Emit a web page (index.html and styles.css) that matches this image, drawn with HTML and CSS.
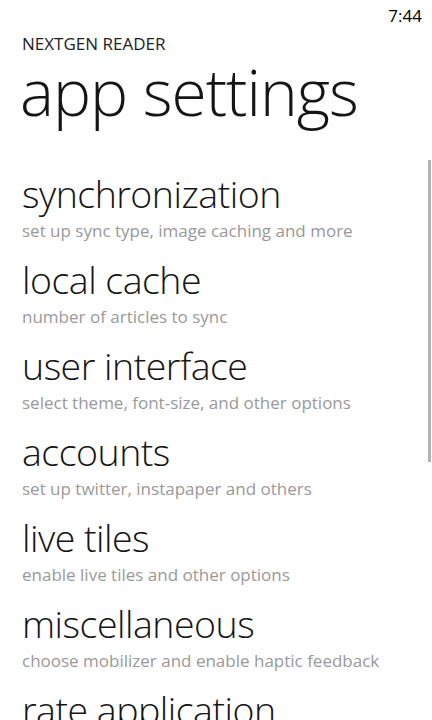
FILE: index.html
```html
<!DOCTYPE html>
<html>
<head>
<meta charset="utf-8">
<link rel="stylesheet" href="styles.css">
</head>
<body>
<div class="phone">
  <div class="status"><span class="time">7:44</span></div>
  <div class="app-name">NEXTGEN READER</div>
  <h1 class="page-title">app settings</h1>
  <div class="content">
    <ul class="list">
      <li class="item"><div class="item-title">synchronization</div><div class="item-sub">set up sync type, image caching and more</div></li>
      <li class="item"><div class="item-title">local cache</div><div class="item-sub">number of articles to sync</div></li>
      <li class="item"><div class="item-title">user interface</div><div class="item-sub">select theme, font-size, and other options</div></li>
      <li class="item"><div class="item-title">accounts</div><div class="item-sub">set up twitter, instapaper and others</div></li>
      <li class="item"><div class="item-title">live tiles</div><div class="item-sub">enable live tiles and other options</div></li>
      <li class="item"><div class="item-title">miscellaneous</div><div class="item-sub">choose mobilizer and enable haptic feedback</div></li>
      <li class="item"><div class="item-title">rate application</div><div class="item-sub">rate and review this app</div></li>
    </ul>
    <div class="scrollbar"></div>
  </div>
</div>
</body>
</html>
```
FILE: styles.css
```css
html, body {
  margin: 0;
  padding: 0;
  background: #ffffff;
}
.phone {
  width: 432px;
  height: 720px;
  overflow: hidden;
  position: relative;
  font-family: "Open Sans", "Noto Sans", sans-serif;
  color: #000;
}
.status {
  height: 30px;
  display: flex;
  justify-content: flex-end;
  align-items: center;
  padding-right: 10px;
}
.time {
  font-size: 17px;
  font-weight: 400;
  color: #000;
}
.app-name {
  padding-left: 22px;
  font-size: 17px;
  line-height: 28px;
  font-weight: 400;
  color: #222;
}
.page-title {
  margin: 0;
  padding-left: 20px;
  font-size: 64px;
  font-weight: 300;
  line-height: 68px;
  color: #151515;
  letter-spacing: -1px;
}
.content {
  position: relative;
}
.list {
  list-style: none;
  margin: 0;
  padding: 45px 0 0 22px;
}
.item {
  height: 86px;
}
.item-title {
  font-size: 37.5px;
  font-weight: 300;
  line-height: 46px;
  color: #151515;
  letter-spacing: -0.5px;
}
.item-sub {
  font-size: 17px;
  line-height: 28px;
  color: #999;
}
.scrollbar {
  position: absolute;
  left: 428px;
  top: 34px;
  width: 3px;
  height: 302px;
  background: #b4b4b4;
}
```
